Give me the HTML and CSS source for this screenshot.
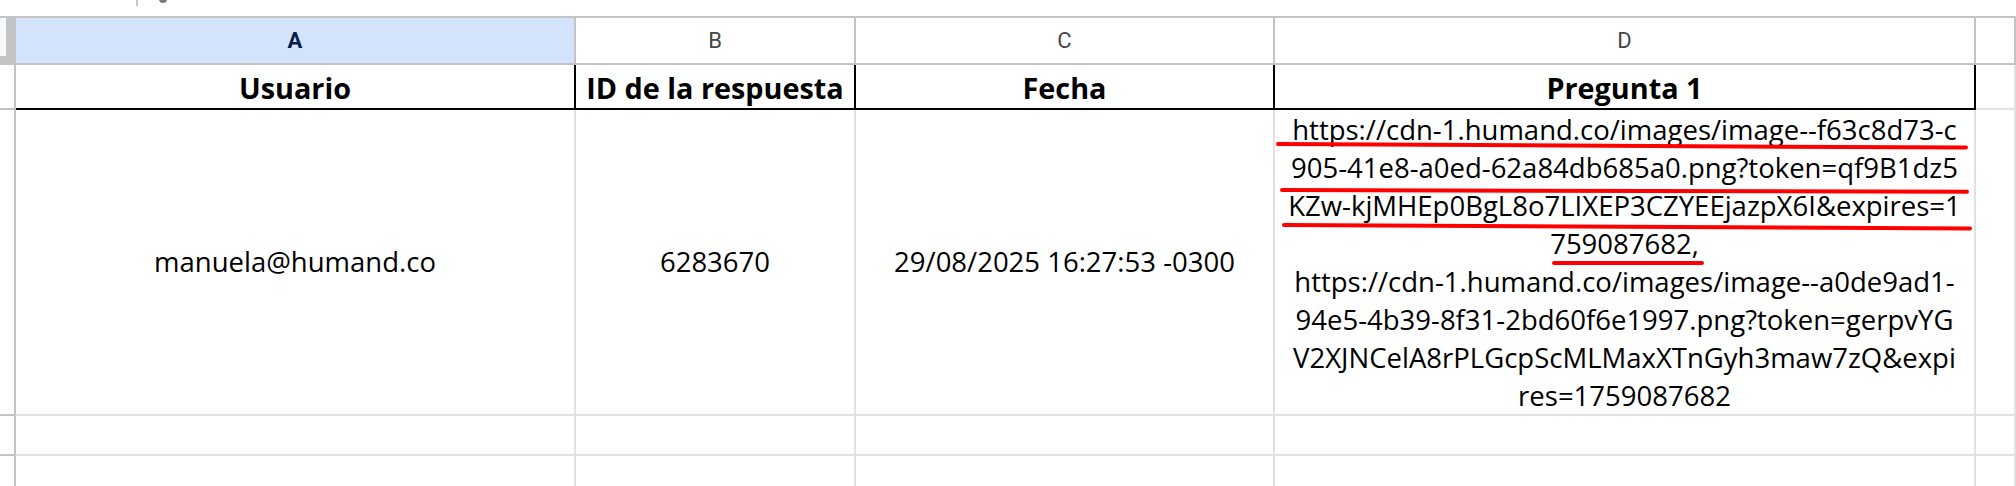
FILE: index.html
```html
<!DOCTYPE html>
<html lang="es">
<head>
<meta charset="utf-8">
<title>Hoja de respuestas</title>
<link rel="stylesheet" href="styles.css">
</head>
<body>
<div class="topbar">
  <span class="tick"></span>
  <span class="knob"></span>
</div>
<div class="sheet">
  <div class="cell corner"><div class="corner-inner"></div></div>
  <div class="cell colhead sel">A</div>
  <div class="cell colhead">B</div>
  <div class="cell colhead">C</div>
  <div class="cell colhead">D</div>
  <div class="cell colhead"></div>

  <div class="cell rowhead"></div>
  <div class="cell title">Usuario</div>
  <div class="cell title">ID de la respuesta</div>
  <div class="cell title">Fecha</div>
  <div class="cell title">Pregunta 1</div>
  <div class="cell"></div>

  <div class="cell rowhead"></div>
  <div class="cell mid">manuela@humand.co</div>
  <div class="cell mid">6283670</div>
  <div class="cell mid">29/08/2025 16:27:53 -0300</div>
  <div class="cell answer">
    <div class="answer-text">https://cdn-1.humand.co/images/image--f63c8d73-c<br>905-41e8-a0ed-62a84db685a0.png?token=qf9B1dz5<br>KZw-kjMHEp0BgL8o7LIXEP3CZYEEjazpX6I&amp;expires=1<br>759087682,<br>https://cdn-1.humand.co/images/image--a0de9ad1-<br>94e5-4b39-8f31-2bd60f6e1997.png?token=gerpvYG<br>V2XJNCelA8rPLGcpScMLMaxXTnGyh3maw7zQ&amp;expi<br>res=1759087682</div>
    <span class="mark m1"></span>
    <span class="mark m2"></span>
    <span class="mark m3"></span>
    <span class="mark m4"></span>
  </div>
  <div class="cell"></div>

  <div class="cell rowhead"></div>
  <div class="cell"></div>
  <div class="cell"></div>
  <div class="cell"></div>
  <div class="cell"></div>
  <div class="cell"></div>

  <div class="cell rowhead"></div>
  <div class="cell"></div>
  <div class="cell"></div>
  <div class="cell"></div>
  <div class="cell"></div>
  <div class="cell"></div>
</div>
</body>
</html>
```
FILE: styles.css
```css
html, body {
  margin: 0;
  padding: 0;
  background: #ffffff;
}
body {
  width: 2016px;
  height: 486px;
  overflow: hidden;
}

.topbar {
  height: 16px;
  border-bottom: 2px solid #c4c4c4;
  display: flex;
  align-items: flex-start;
  padding-left: 136px;
  gap: 21px;
  overflow: hidden;
}
.tick {
  width: 2px;
  height: 6px;
  background: #c7c7c7;
}
.knob {
  width: 8px;
  height: 8px;
  border-radius: 50%;
  background: #7a7a7a;
  margin-top: -5px;
}

.sheet {
  display: grid;
  grid-template-columns: 16px 560px 280px 419px 701px 1fr;
  grid-template-rows: 47px 45px 306px 40px 40px;
}

.cell {
  box-sizing: border-box;
  border-right: 2px solid #e1e1e1;
  border-bottom: 2px solid #e1e1e1;
  display: flex;
  justify-content: center;
  text-align: center;
  font-family: "Open Sans", Lato, "Liberation Sans", sans-serif;
  font-size: 27.5px;
  color: #000000;
  white-space: nowrap;
  overflow: hidden;
}

.corner {
  background: #c4c4c4;
  border: none;
  justify-content: flex-start;
}
.corner-inner {
  width: 6px;
  height: 38px;
  background: #f8f9fa;
}

.colhead {
  border-right-color: #c4c4c4;
  border-bottom-color: #c4c4c4;
  align-items: center;
  font-family: Roboto, "Liberation Sans", sans-serif;
  font-size: 22px;
  color: #444746;
}
.colhead.sel {
  background: #d3e3fd;
  color: #041e49;
  font-weight: 700;
}

.rowhead {
  border-right-color: #c4c4c4;
  border-bottom-color: #c4c4c4;
}

.title {
  font-weight: 700;
  font-size: 28.8px;
  align-items: flex-end;
  line-height: 38px;
  padding-bottom: 1px;
  border-right-color: #000000;
  border-bottom-color: #000000;
}

.mid {
  align-items: center;
  line-height: 38px;
}

.answer {
  position: relative;
  align-items: flex-start;
  line-height: 38px;
  padding-top: 1px;
}

.mark {
  position: absolute;
  height: 4px;
  background: #ff0000;
  border-radius: 2px;
  transform-origin: left center;
}
.m1 { left: 1px;   top: 32px;  width: 692px; transform: rotate(0.3deg); }
.m2 { left: 5px;   top: 78px;  width: 689px; transform: rotate(0.15deg); }
.m3 { left: 7px;   top: 113px; width: 690px; transform: rotate(0.3deg); }
.m4 { left: 277px; top: 151px; width: 152px; }
```
